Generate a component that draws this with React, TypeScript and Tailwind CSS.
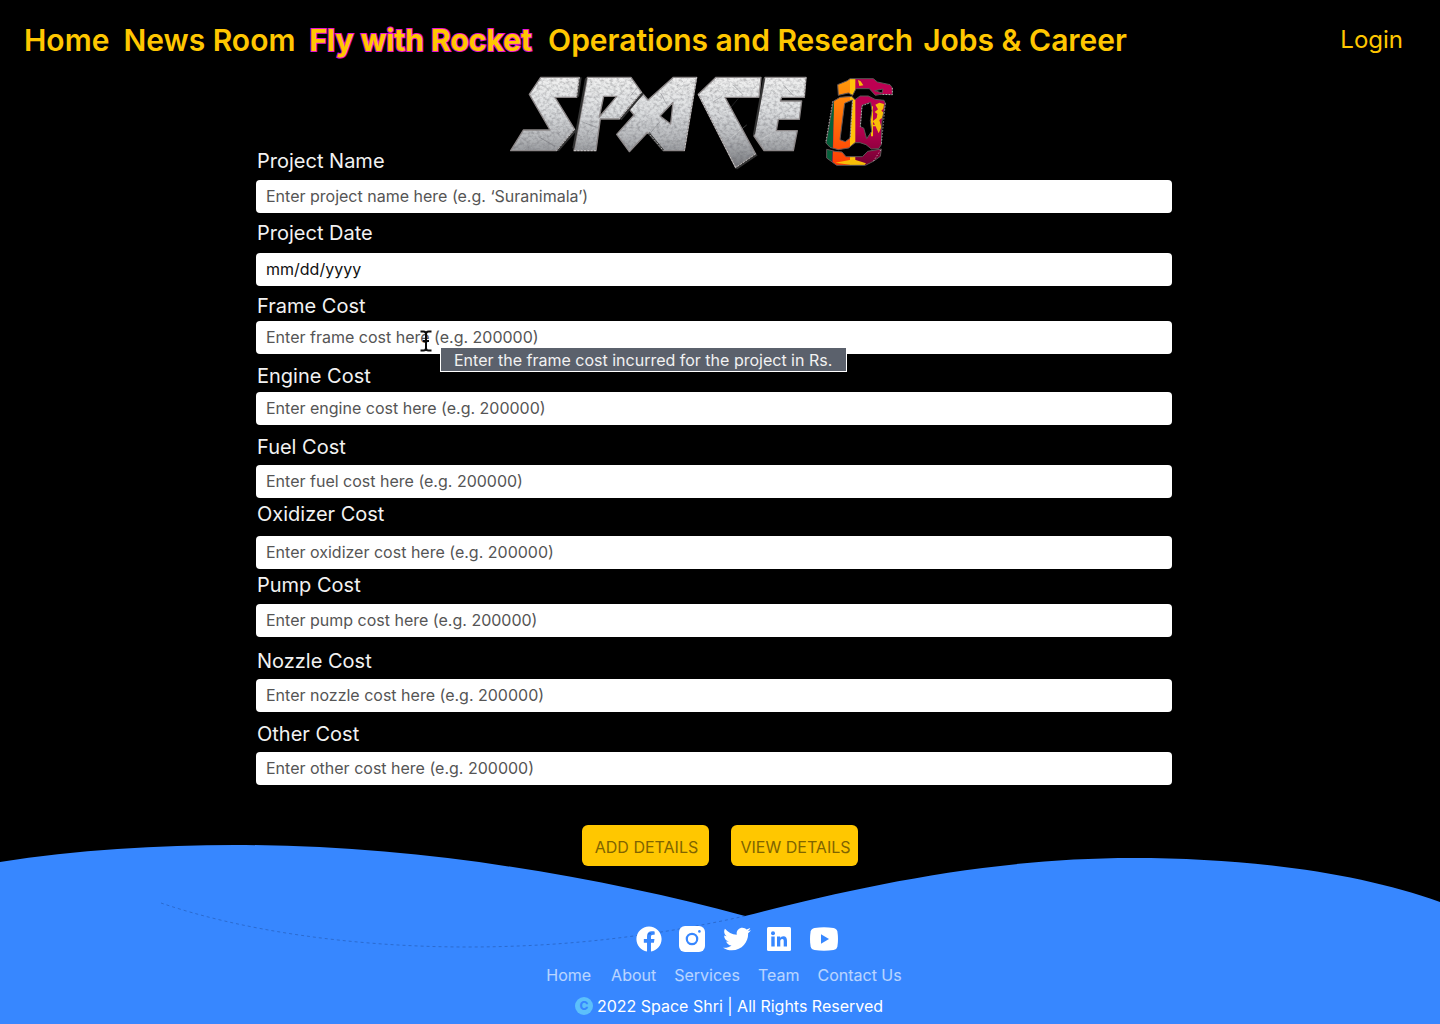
import React from "react";
import { FaFacebook, FaTwitter } from "react-icons/fa";

const navItems = [
  { label: "Home", cls: "font-semibold mr-3.5" },
  { label: "News Room", cls: "font-semibold mr-3.5" },
  {
    label: "Fly with Rocket",
    cls: "font-bold mr-4 [-webkit-text-stroke:2px_#e815d0] [paint-order:stroke_fill]",
  },
  { label: "Operations and Research", cls: "font-semibold mr-2.5" },
  { label: "Jobs & Career", cls: "font-semibold" },
];

const fields = [
  { id: "name", label: "Project Name", hint: "Enter project name here (e.g. ‘Suranimala’)", row: "gap-[7px]" },
  { id: "date", label: "Project Date", hint: "mm/dd/yyyy", row: "mt-2 gap-2", dark: true },
  {
    id: "frame",
    label: "Frame Cost",
    hint: "Enter frame cost here (e.g. 200000)",
    row: "mt-2 gap-[3px]",
    tip: "Enter the frame cost incurred for the project in Rs.",
  },
  { id: "engine", label: "Engine Cost", hint: "Enter engine cost here (e.g. 200000)", row: "mt-2.5 gap-1" },
  { id: "fuel", label: "Fuel Cost", hint: "Enter fuel cost here (e.g. 200000)", row: "mt-2.5 gap-1.5" },
  { id: "oxidizer", label: "Oxidizer Cost", hint: "Enter oxidizer cost here (e.g. 200000)", row: "mt-1 gap-2.5" },
  { id: "pump", label: "Pump Cost", hint: "Enter pump cost here (e.g. 200000)", row: "mt-1 gap-[7px]" },
  { id: "nozzle", label: "Nozzle Cost", hint: "Enter nozzle cost here (e.g. 200000)", row: "mt-3 gap-1.5" },
  { id: "other", label: "Other Cost", hint: "Enter other cost here (e.g. 200000)", row: "mt-2.5 gap-1.5" },
];

const footerLinks = [
  { label: "Home", cls: "mr-5" },
  { label: "About", cls: "mr-[18px]" },
  { label: "Services", cls: "mr-[18px]" },
  { label: "Team", cls: "mr-[18px]" },
  { label: "Contact Us", cls: "" },
];

function Logo() {
  return (
    <svg viewBox="0 0 1230 315" className="block h-[105px] w-[410px]" role="img" aria-label="Space Shri">
      <defs>
        <linearGradient id="steel" x1="0" y1="37" x2="0" y2="300" gradientUnits="userSpaceOnUse">
          <stop offset="0" stopColor="#f0f0f0" />
          <stop offset="0.4" stopColor="#dcdee0" />
          <stop offset="0.7" stopColor="#b4b6b9" />
          <stop offset="1" stopColor="#7c7e82" />
        </linearGradient>
        <filter id="grain" x="0" y="0" width="100%" height="100%">
          <feTurbulence type="fractalNoise" baseFrequency="0.1 0.12" numOctaves="3" seed="7" result="n" />
          <feColorMatrix in="n" type="matrix" values="0 0 0 0 0.15  0 0 0 0 0.15  0 0 0 0 0.17  1.2 0 0 0 -0.45" result="d" />
          <feComposite in="d" in2="SourceGraphic" operator="in" result="g" />
          <feMerge>
            <feMergeNode in="SourceGraphic" />
            <feMergeNode in="g" />
          </feMerge>
        </filter>
        <path id="letters" fillRule="evenodd" d="M122 37H238L230 97H165L224 193 170 257H32L70 195H150L88 88ZM262 37H393L425 82 358 162H301L288 257H222ZM311 94H350L298 156ZM520 37H590L553 257H490L443 202 388 260 350 208 402 150 384 128 430 88 444 105ZM519 112 512 177 480 153ZM648 37H783L777 97H675L767 267 707 308 595 88ZM795 37H918L913 97H845L841 108H905L898 163H835L829 197H892L880 257H792L762 213Z" />
        <path id="crestShape" fillRule="evenodd" clipRule="evenodd" d="M83 50 112 38 120 32H190L202 42 240 50 247 60V80L212 79 196 82 178 62H138L128 82 115 75 85 82ZM194 68 216 75 219 63ZM70 100 90 88 125 85 135 95 150 84H175L195 94 222 97 226 106 216 160 214 230 206 242 184 243 168 230 150 224 135 224 116 240 85 245 60 238 48 225ZM104 106 127 96 120 210 106 221 90 215ZM156 112 182 103 186 128 181 158 185 190 170 212 161 180 151 176ZM50 244 75 250 96 252 108 266H157L173 250 214 243 211 265 190 280 166 292H80L50 270Z" />
        <clipPath id="crest">
          <use href="#crestShape" clipRule="evenodd" />
        </clipPath>
        <linearGradient id="shade" x1="0" y1="30" x2="0" y2="292" gradientUnits="userSpaceOnUse">
          <stop offset="0" stopColor="#000" stopOpacity="0" />
          <stop offset="0.55" stopColor="#000" stopOpacity="0" />
          <stop offset="1" stopColor="#000" stopOpacity="0.4" />
        </linearGradient>
        <linearGradient id="orange" x1="0" y1="30" x2="0" y2="292" gradientUnits="userSpaceOnUse">
          <stop offset="0" stopColor="#ff9a0c" />
          <stop offset="1" stopColor="#ff3d05" />
        </linearGradient>
      </defs>
      <g filter="url(#grain)">
        <use href="#letters" fill="url(#steel)" />
      </g>
      <g fill="none" stroke="#55575b" strokeWidth="1.5" opacity="0.7">
        <path d="M245 170 287 186M115 215 165 244M482 84 500 118M390 95 410 70M450 205 480 170M700 60 730 90M690 130 715 100M850 60 880 92M640 110 665 95" />
      </g>
      <g fill="none" stroke="#f2f2f2" strokeWidth="1.5" opacity="0.5">
        <path d="M120 120 150 80M500 60 560 120M650 60 700 50M690 220 740 180M800 80 850 50M790 220 820 200" />
      </g>
      <use href="#letters" fill="none" stroke="#8b8687" strokeWidth="4" strokeLinejoin="round" />
      <path d="M242 37 234 95M228 195 174 257M429 84 362 164M446 204 490 257M771 269 709 311M258 40 220 250M792 40 762 208" fill="none" stroke="#333" strokeWidth="6" />
      <path d="M238 37 230 95M590 37 553 257M224 193 170 257M425 82 358 162M444 202 490 257M918 37 912 97M595 88 707 308M767 267 707 308M222 257H288" fill="none" stroke="#e8e8e8" strokeWidth="2" strokeDasharray="6 4" />

      <g transform="translate(930 9)">
        <g clipPath="url(#crest)">
          <rect x="40" y="20" width="220" height="290" fill="#bd0052" />
          <path d="M40 85H74L66 300H40Z" fill="#05603a" />
          <path d="M74 20H123V300H68Z" fill="url(#orange)" />
          <path d="M120 20H136V300H120Z" fill="#ffc20a" />
          <rect x="136" y="20" width="120" height="290" fill="url(#shade)" />
          <path d="M144 36 152 40 160 52 148 54ZM183 115H189V205H183ZM174 170H197V175H174ZM196 110 208 104 222 108 220 122 214 128 222 135 216 150 208 156 214 178 206 196 200 182 194 168 188 160 200 150 202 138 194 132 204 124ZM76 284 130 274 168 286 160 296Z" fill="#f7bd08" />
        </g>
        <use href="#crestShape" fill="none" stroke="#5b5655" strokeWidth="3" strokeLinejoin="round" />
        <path d="M68 100 47 225M128 100 121 210M226 106 214 230M247 60V80L212 79M176 106 156 114 151 176M212 246 190 280" fill="none" stroke="#ddd" strokeWidth="2" strokeDasharray="4 5" />
      </g>
    </svg>
  );
}

function TextCursor() {
  return (
    <svg viewBox="0 0 14 22" className="absolute bottom-0.5 left-[163px] h-[22px] w-3.5" aria-hidden="true">
      <path d="M1.5 1.5H4.5Q7 1.5 7 4V18Q7 20.5 4.5 20.5H1.5M12.5 1.5H9.5Q7 1.5 7 4M7 18Q7 20.5 9.5 20.5H12.5M4 11H10" fill="none" stroke="#0b0b0b" strokeWidth="2" />
    </svg>
  );
}

function Instagram() {
  return (
    <svg viewBox="0 0 26 26" className="size-[26px]" aria-hidden="true">
      <rect width="26" height="26" rx="6" fill="#fff" />
      <circle cx="13" cy="13" r="5.2" fill="none" stroke="#3787ff" strokeWidth="2.2" />
      <circle cx="20.4" cy="5.4" r="1.3" fill="#3787ff" />
    </svg>
  );
}

function Linkedin() {
  return (
    <svg viewBox="0 0 24 24" className="size-6" aria-hidden="true">
      <rect width="24" height="24" rx="1.5" fill="#fff" />
      <circle cx="6" cy="6.2" r="2" fill="#3787ff" />
      <path d="M4.3 9.5H7.7V19.5H4.3ZM10 9.5H13.2V11C13.8 10 14.8 9.2 16.3 9.2 19 9.2 20 11 20 13.7V19.5H16.7V14.3C16.7 12.9 16.4 12 15.2 12 13.9 12 13.3 13 13.3 14.3V19.5H10Z" fill="#3787ff" />
    </svg>
  );
}

function Youtube() {
  return (
    <svg viewBox="0 0 28 24" className="h-6 w-7" aria-hidden="true">
      <path d="M4.5 1Q14-.4 23.5 1Q26.7 1.5 27.4 4.5Q28.6 12 27.4 19.5Q26.7 22.5 23.5 23Q14 24.4 4.5 23Q1.3 22.5.6 19.5Q-.6 12 .6 4.5Q1.3 1.5 4.5 1Z" fill="#fff" />
      <path d="M11 7.3 19 12 11 16.7Z" fill="#3787ff" />
    </svg>
  );
}

export default function App() {
  return (
    <div className="flex min-h-screen flex-col bg-black font-['Inter',sans-serif]">
      <header>
        <nav className="flex h-[65px] items-center pt-3.5 pr-[37px] pl-6 text-[30px] leading-[48px] whitespace-nowrap text-[#ffc700]">
          {navItems.map((n) => (
            <a key={n.label} href="#" className={n.cls}>
              {n.label}
            </a>
          ))}
          <a href="#" className="ml-auto text-2xl leading-[50px]">
            Login
          </a>
        </nav>
        <div className="-mb-[21px] flex justify-center pr-[30px]">
          <Logo />
        </div>
      </header>

      <main className="relative z-10 pr-[268px] pl-64">
        <form>
          {fields.map((f) => (
            <div key={f.id} className={`relative flex flex-col ${f.row}`}>
              <label htmlFor={f.id} className="pl-px text-xl leading-6 text-[#f2f2f2]">
                {f.label}
              </label>
              <input
                id={f.id}
                type="text"
                placeholder={f.hint}
                className={`h-[33px] w-full rounded-[4px] bg-white px-2.5 pb-0.5 text-base text-black outline-none ${
                  f.dark ? "placeholder:text-[#111]" : "placeholder:text-[#555]"
                }`}
              />
              {f.tip && (
                <>
                  <TextCursor />
                  <div
                    role="tooltip"
                    className="absolute top-[53px] left-[184px] z-10 h-[25px] border border-white bg-[#5b616c] pr-3.5 pl-[13px] text-base leading-6 whitespace-nowrap text-[#f2f2f2]"
                  >
                    {f.tip}
                  </div>
                </>
              )}
            </div>
          ))}
          <div className="mt-10 flex justify-center gap-[22px] pl-3">
            <button type="button" className="h-[41px] w-[127px] rounded-md bg-[#ffc700] pt-0.5 pl-0.5 text-base whitespace-nowrap text-[#806400]">
              ADD DETAILS
            </button>
            <button type="button" className="h-[41px] w-[127px] rounded-md bg-[#ffc700] pt-0.5 pl-0.5 text-base whitespace-nowrap text-[#806400]">
              VIEW DETAILS
            </button>
          </div>
        </form>
      </main>

      <footer className="relative -mt-[21px] flex flex-1 flex-col items-center pt-20">
        <svg viewBox="0 845 1440 179" preserveAspectRatio="none" className="absolute inset-0 h-full w-full" aria-hidden="true">
          <path d="M0 862C75 850 160 845 235 845C420 845 600 877 745 916C850 889 985 858 1133 858C1250 858 1360 873 1440 902V1024H0Z" fill="#3787ff" />
          <path d="M161 903C240 930 350 947 468 947C570 947 660 935 745 916" fill="none" stroke="#1d4da0" strokeWidth="1" strokeDasharray="3 3" opacity="0.5" />
        </svg>
        <div className="relative flex h-7 items-center pl-[34px] text-white">
          <a href="#" aria-label="Facebook" className="mr-[17px]"><FaFacebook className="size-[26px]" /></a>
          <a href="#" aria-label="Instagram" className="mr-[18px]"><Instagram /></a>
          <a href="#" aria-label="Twitter" className="mr-4"><FaTwitter className="size-7" /></a>
          <a href="#" aria-label="LinkedIn" className="mr-[19px]"><Linkedin /></a>
          <a href="#" aria-label="YouTube"><Youtube /></a>
        </div>
        <nav className="relative mt-2.5 flex pl-2 text-base leading-6 text-white/65">
          {footerLinks.map((l) => (
            <a key={l.label} href="#" className={l.cls}>
              {l.label}
            </a>
          ))}
        </nav>
        <p className="relative mt-[7px] flex items-center gap-1 pl-[18px] text-base leading-6 text-white">
          <span className="flex size-[18px] items-center justify-center rounded-full bg-[#5cc0fb] text-xs font-extrabold text-[#3787ff]">C</span>
          2022 Space Shri | All Rights Reserved
        </p>
      </footer>
    </div>
  );
}
